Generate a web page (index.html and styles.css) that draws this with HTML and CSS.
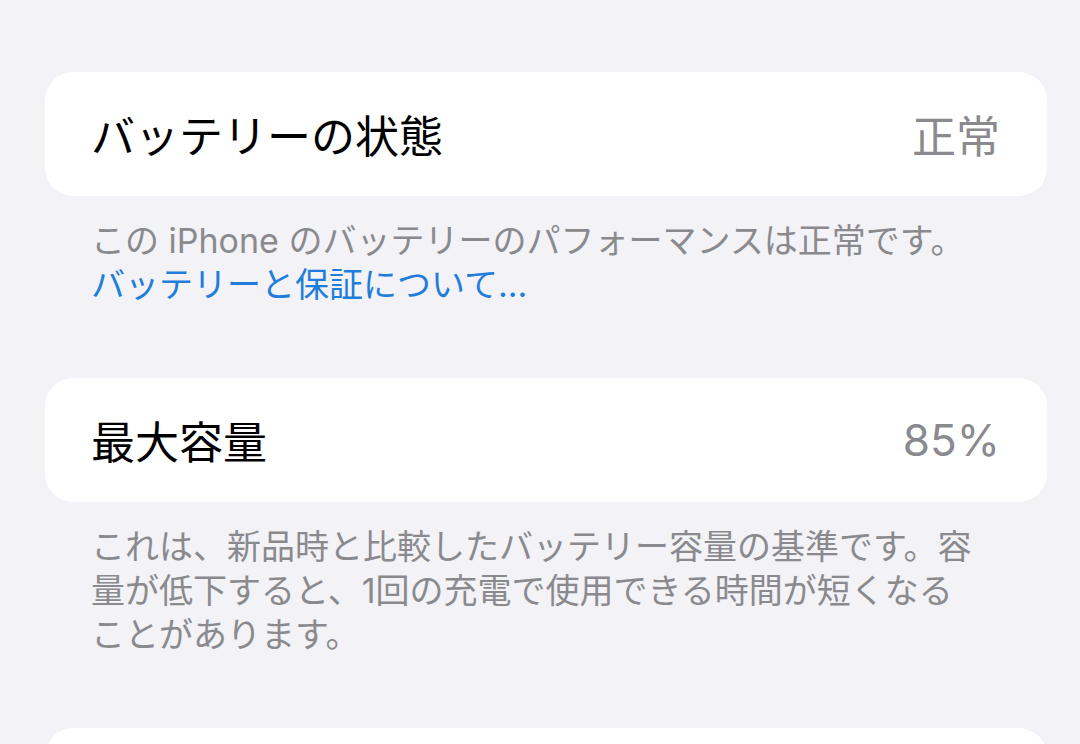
FILE: index.html
```html
<!DOCTYPE html>
<html lang="ja">
<head>
  <meta charset="UTF-8">
  <meta name="viewport" content="width=device-width, initial-scale=1.0">
  <title>バッテリーの状態</title>
  <link rel="stylesheet" href="styles.css">
</head>
<body>
  <div class="page">
    <div class="group">
      <div class="card">
        <span class="label">バッテリーの状態</span>
        <span class="value">正常</span>
      </div>
      <div class="footer">
        この iPhone のバッテリーのパフォーマンスは正常です。<br>
        <a class="link" href="#">バッテリーと保証について...</a>
      </div>
    </div>

    <div class="group">
      <div class="card">
        <span class="label">最大容量</span>
        <span class="value">85%</span>
      </div>
      <div class="footer">
        これは、新品時と比較したバッテリー容量の基準です。容<br>量が低下すると、1回の充電で使用できる時間が短くなる<br>ことがあります。
      </div>
    </div>

    <div class="group">
      <div class="card"></div>
    </div>
  </div>
</body>
</html>
```

FILE: styles.css
```css
html, body {
  margin: 0;
  padding: 0;
  height: 100%;
  overflow: hidden;
}

body {
  font-family: Inter, "Noto Sans CJK JP", sans-serif;
  background-color: #f2f2f7;
}

.page {
  padding-top: 72px;
}

.card {
  display: flex;
  align-items: center;
  justify-content: space-between;
  height: 124px;
  margin: 0 33px 0 45px;
  padding: 0 47px 0 46px;
  background-color: #fff;
  border-radius: 28px;
}

.label {
  font-size: 44px;
  color: #000;
}

.value {
  font-size: 44px;
  color: #8a8a8e;
}

.footer {
  padding: 23px 80px 71px 91px;
  font-size: 34px;
  line-height: 44px;
  color: #8a8a8e;
}

.link {
  color: #1f7ddc;
  text-decoration: none;
}
```
